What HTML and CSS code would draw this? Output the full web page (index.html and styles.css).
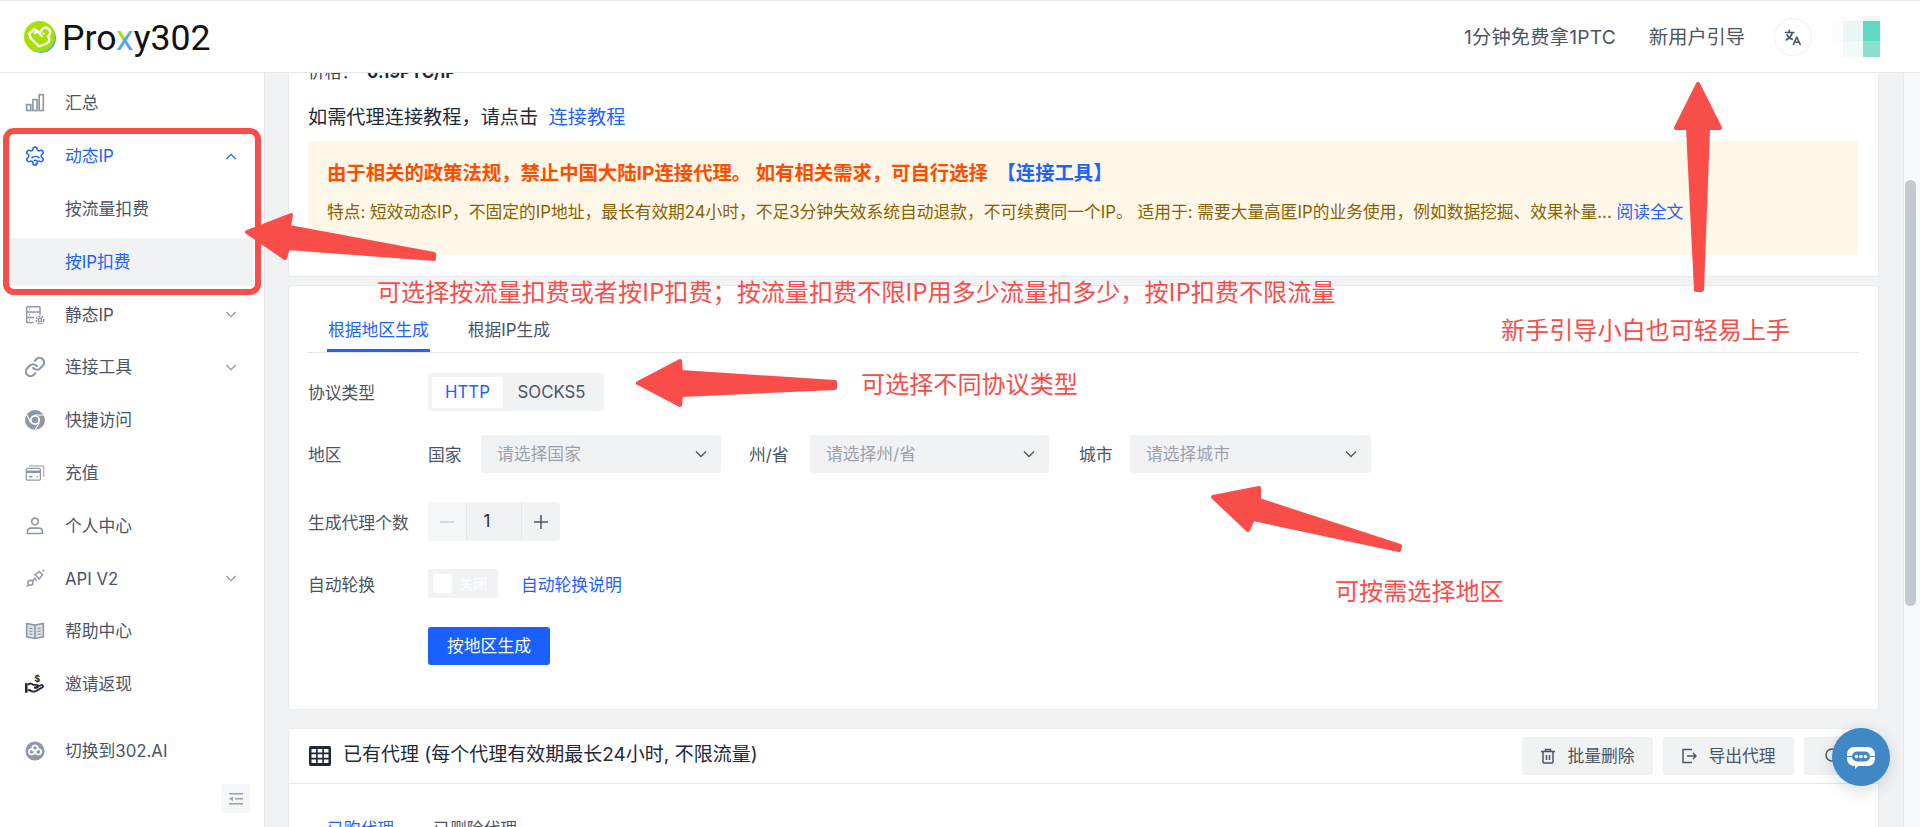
FILE: index.html
```html
<!DOCTYPE html>
<html lang="zh-CN">
<head>
    <meta charset="UTF-8">
    <title>Proxy302</title>
    <link rel="stylesheet" href="styles.css">
</head>
<body>
    <header class="topbar">
        <div class="logo">
            <svg class="logo-mark" viewBox="0 0 32 32">
                <circle cx="17" cy="17" r="15" fill="#4aa8f0"/>
                <circle cx="15.5" cy="15.5" r="15.5" fill="#a5e000"/>
                <path d="M5 13l5.500-5 5 4 3-4a4.500 4.500 0 0 1 7 5.500l-1.500 2 1 1.500a4.500 4.500 0 0 1-2.500 5.500l-7.500 3-8-8z" fill="none" stroke="#fff" stroke-width="2.400" stroke-linejoin="round"/>
                <path d="M10.500 13a2.500 2.500 0 0 1 4.500-1l3.500 4M18.500 12.500h2" fill="none" stroke="#fff" stroke-width="2"/>
            </svg>
            <span class="logo-text">Pro<span class="logo-x">x</span>y302</span>
        </div>
        <div class="topbar-right">
            <span class="top-link free-link">1分钟免费拿1PTC</span>
            <span class="top-link">新用户引导</span>
            <span class="lang-btn">
                <svg viewBox="0 0 24 24" width="18" height="18" fill="none" stroke="#4b5563" stroke-width="2.200" stroke-linecap="round" stroke-linejoin="round"><path d="M2 6h11M7 3v3M11 6c-1 5-4 8-8 10M4 9c1 3 3.500 5 7 6"/><path d="M12.500 22l4.500-10 4.500 10M14 19h6"/></svg>
            </span>
            <div class="avatar">
                <i class="av-a"></i><i class="av-b"></i><i class="av-c"></i>
                <i class="av-d"></i><i class="av-e"></i><i class="av-f"></i>
                <i class="av-a"></i><i class="av-g"></i><i class="av-h"></i>
            </div>
        </div>
    </header>

    <div class="app">
        <aside class="sidebar">
            <ul class="nav">
                <li class="nav-item">
                    <svg class="nav-icon" viewBox="0 0 24 24" fill="none" stroke="#8f98a6" stroke-width="2"><rect x="2" y="14" width="5" height="7"/><rect x="9.500" y="8" width="5" height="13"/><rect x="17" y="2" width="5" height="19"/></svg>
                    <span>汇总</span>
                </li>
                <li class="nav-item active">
                    <svg class="nav-icon" viewBox="1 1 22 22" fill="none" stroke="#1e62ff" stroke-width="1.700"><path d="M12.220 2h-.44a2 2 0 0 0-2 2v.18a2 2 0 0 1-1 1.730l-.43.25a2 2 0 0 1-2 0l-.15-.08a2 2 0 0 0-2.730.73l-.22.38a2 2 0 0 0 .73 2.730l.15.1a2 2 0 0 1 1 1.720v.51a2 2 0 0 1-1 1.740l-.15.09a2 2 0 0 0-.73 2.730l.22.38a2 2 0 0 0 2.730.73l.15-.08a2 2 0 0 1 2 0l.43.25a2 2 0 0 1 1 1.730V20a2 2 0 0 0 2 2h.44a2 2 0 0 0 2-2v-.18a2 2 0 0 1 1-1.730l.43-.25a2 2 0 0 1 2 0l.15.08a2 2 0 0 0 2.730-.73l.22-.39a2 2 0 0 0-.73-2.730l-.15-.08a2 2 0 0 1-1-1.740v-.5a2 2 0 0 1 1-1.740l.15-.09a2 2 0 0 0 .73-2.730l-.22-.38a2 2 0 0 0-2.730-.73l-.15.08a2 2 0 0 1-2 0l-.43-.25a2 2 0 0 1-1-1.730V4a2 2 0 0 0-2-2z"/><path d="M8 14.500a6 6 0 0 1 9 0M10.500 17.500a3 3 0 0 1 4 0M12 20.500h.5" stroke-width="1.500"/></svg>
                    <span>动态IP</span>
                    <svg class="chevron" viewBox="0 0 14 8"><path d="M1.500 7L7 1.500 12.500 7"/></svg>
                </li>
                <li class="nav-item sub">
                    <span>按流量扣费</span>
                </li>
                <li class="nav-item sub current">
                    <span>按IP扣费</span>
                </li>
                <li class="nav-item">
                    <svg class="nav-icon" viewBox="0 0 24 24" fill="none" stroke="#8f98a6" stroke-width="1.800"><path d="M10 21H3a1 1 0 0 1-1-1V3a1 1 0 0 1 1-1h14a1 1 0 0 1 1 1v9M2 8.500h16M2 15h9M5 5.300h1M5 11.800h1M5 18h1"/><circle cx="18" cy="18" r="2"/><circle cx="18" cy="18" r="4.500" stroke-dasharray="2.500 1.200" stroke-width="1.700"/></svg>
                    <span>静态IP</span>
                    <svg class="chevron" viewBox="0 0 14 8"><path d="M1.500 1L7 6.500 12.500 1"/></svg>
                </li>
                <li class="nav-item">
                    <svg class="nav-icon" viewBox="1 1 22 22" fill="none" stroke="#8f98a6" stroke-width="2.400" stroke-linecap="round"><path d="M10 13a5 5 0 0 0 7.540.54l3-3a5 5 0 0 0-7.070-7.070l-1.720 1.710"/><path d="M14 11a5 5 0 0 0-7.540-.54l-3 3a5 5 0 0 0 7.070 7.070l1.710-1.710"/></svg>
                    <span>连接工具</span>
                    <svg class="chevron" viewBox="0 0 14 8"><path d="M1.500 1L7 6.500 12.500 1"/></svg>
                </li>
                <li class="nav-item">
                    <svg class="nav-icon" viewBox="1 1 22 22"><circle cx="12" cy="12" r="11" fill="#8f98a6"/><circle cx="12" cy="12" r="5.500" fill="#fff"/><circle cx="12" cy="12" r="3.600" fill="#8f98a6"/><path d="M12 6.500h10M7.200 14.700L2.800 6M16.800 14.700L12 23" stroke="#fff" stroke-width="1.300"/></svg>
                    <span>快捷访问</span>
                </li>
                <li class="nav-item">
                    <svg class="nav-icon" viewBox="0 0 24 24" fill="none" stroke="#8f98a6" stroke-width="1.500"><rect x="1.500" y="6.500" width="17" height="14" rx="1.500"/><path d="M1.500 10.500h17" stroke-width="3"/><path d="M5 16.500h4M14 16.500h1.500" stroke-width="2"/><path d="M5 3.500h17.500v13" stroke-width="1.200"/></svg>
                    <span>充值</span>
                </li>
                <li class="nav-item">
                    <svg class="nav-icon" viewBox="0 0 24 24" fill="none" stroke="#8f98a6" stroke-width="2"><circle cx="12" cy="6.500" r="4"/><path d="M3 21v-2.500a4 4 0 0 1 4-4h10a4 4 0 0 1 4 4V21z"/></svg>
                    <span>个人中心</span>
                </li>
                <li class="nav-item">
                    <svg class="nav-icon" viewBox="0 0 24 24" fill="none" stroke="#8f98a6" stroke-width="1.800"><circle cx="6.500" cy="16.500" r="3"/><path d="M12 7l5-4 4 4-4 5zM9 14l3.500-3.500M2 21l2.300-2.300M21 3l2-2M14 14l-2.500-2.500"/></svg>
                    <span>API V2</span>
                    <svg class="chevron" viewBox="0 0 14 8"><path d="M1.500 1L7 6.500 12.500 1"/></svg>
                </li>
                <li class="nav-item">
                    <svg class="nav-icon" viewBox="0 0 24 24" fill="none" stroke="#8f98a6" stroke-width="2"><path d="M2 3l10 2 10-2v16l-10 2-10-2zM12 5v16" fill="#dfe2e6"/><path d="M5 8.500l4 .7M5 12l4 .7M5 15.500l4 .7M15 9.200l4-.7M15 12.700l4-.7M15 16.200l4-.7" stroke-width="1.500"/></svg>
                    <span>帮助中心</span>
                </li>
                <li class="nav-item">
                    <svg class="nav-icon" viewBox="0 0 24 24" fill="none" stroke="#1f2937" stroke-width="2.200"><path d="M1.500 11v11.500" stroke-width="3"/><path d="M3 13c3-2.500 5-2 7 0h4a1.500 1.500 0 0 1 0 3.500h-3l8-3a1.600 1.600 0 0 1 2 2.500l-8 4.500c-3 1-6 0-7-1H3"/><text x="11" y="10" class="dollar">$</text></svg>
                    <span>邀请返现</span>
                </li>
            </ul>
            <div class="nav-item switch-item">
                <svg class="nav-icon" viewBox="0 0 24 24"><circle cx="12" cy="12" r="11.500" fill="#8f98a6"/><circle cx="8" cy="13" r="3.300" fill="none" stroke="#fff" stroke-width="2"/><circle cx="16" cy="13" r="3.300" fill="none" stroke="#fff" stroke-width="2"/><circle cx="12" cy="8.500" r="3.300" fill="none" stroke="#fff" stroke-width="2"/></svg>
                <span>切换到302.AI</span>
            </div>
            <div class="collapse-row">
                <span class="collapse-btn">
                    <svg viewBox="0 0 14 12" width="14" height="12" fill="#9ca3af"><rect x="0" y="0" width="14" height="1.500"/><rect x="6" y="5" width="8" height="1.500"/><rect x="0" y="10" width="14" height="1.500"/><path d="M0 5.800L4 3.500v4.600z"/></svg>
                </span>
            </div>
        </aside>

        <main class="main">
            <div class="content">
                <section class="card intro-card">
                    <p class="price">价格： <b>0.19PTC/IP</b></p>
                    <p class="tutorial">如需代理连接教程，请点击 <a class="link tutorial-link">连接教程</a></p>
                    <div class="notice">
                        <p class="notice-title">由于相关的政策法规，禁止中国大陆IP连接代理。 如有相关需求，可自行选择 <a class="link">【连接工具】</a></p>
                        <p class="notice-desc">特点: 短效动态IP，不固定的IP地址，最长有效期24小时，不足3分钟失效系统自动退款，不可续费同一个IP。 适用于: 需要大量高匿IP的业务使用，例如数据挖掘、效果补量... <a class="link">阅读全文</a></p>
                    </div>
                </section>

                <section class="card form-card">
                    <div class="tabs">
                        <span class="tab on">根据地区生成</span>
                        <span class="tab">根据IP生成</span>
                    </div>
                    <div class="form-row row-protocol">
                        <label class="form-label">协议类型</label>
                        <div class="segment">
                            <span class="seg-item on">HTTP</span>
                            <span class="seg-item">SOCKS5</span>
                        </div>
                    </div>
                    <div class="form-row row-region">
                        <label class="form-label">地区</label>
                        <span class="field-name">国家</span>
                        <div class="select select-country">请选择国家<svg class="select-arrow" viewBox="0 0 12 8"><path d="M1 1.500l5 5 5-5"/></svg></div>
                        <span class="field-name state-name">州/省</span>
                        <div class="select select-state">请选择州/省<svg class="select-arrow" viewBox="0 0 12 8"><path d="M1 1.500l5 5 5-5"/></svg></div>
                        <span class="field-name city-name">城市</span>
                        <div class="select select-city">请选择城市<svg class="select-arrow" viewBox="0 0 12 8"><path d="M1 1.500l5 5 5-5"/></svg></div>
                    </div>
                    <div class="form-row row-count">
                        <label class="form-label">生成代理个数</label>
                        <div class="stepper">
                            <span class="step-btn minus"><svg viewBox="0 0 16 16" width="16" height="16"><path d="M1 8h14" stroke="#c9cdd3" stroke-width="1.500"/></svg></span>
                            <span class="step-val">1</span>
                            <span class="step-btn"><svg viewBox="0 0 16 16" width="16" height="16"><path d="M1 8h14M8 1v14" stroke="#4b5563" stroke-width="1.500"/></svg></span>
                        </div>
                    </div>
                    <div class="form-row row-rotate">
                        <label class="form-label">自动轮换</label>
                        <div class="toggle"><i class="knob"></i><span>关闭</span></div>
                        <a class="link rotate-link">自动轮换说明</a>
                    </div>
                    <div class="form-row row-submit">
                        <button class="primary-btn">按地区生成</button>
                    </div>
                </section>

                <section class="card list-card">
                    <div class="list-head">
                        <svg class="table-icon" viewBox="0 0 22 20"><rect width="22" height="20" rx="2" fill="#1f2937"/><path d="M2.500 3h4.600v3.500H2.500zM8.700 3h4.600v3.500H8.700zM14.900 3h4.600v3.500h-4.600zM2.500 8.200h4.600v3.500H2.500zM8.700 8.200h4.600v3.500H8.700zM14.900 8.200h4.600v3.500h-4.600zM2.500 13.400h4.600v3.600H2.500zM8.700 13.400h4.600v3.600H8.700zM14.900 13.400h4.600v3.600h-4.600z" fill="#fff"/></svg>
                        <h2 class="list-title">已有代理 (每个代理有效期最长24小时, 不限流量)</h2>
                        <div class="list-actions">
                            <button class="ghost-btn"><svg viewBox="0 0 16 16" width="16" height="16" fill="none" stroke="#4b5563" stroke-width="1.500"><path d="M1 3.500h14M5.500 3V1.500h5V3M3 3.500V14a1 1 0 0 0 1 1h8a1 1 0 0 0 1-1V3.500M6.500 7v5M9.500 7v5"/></svg>批量删除</button>
                            <button class="ghost-btn"><svg viewBox="0 0 16 16" width="16" height="16" fill="none" stroke="#4b5563" stroke-width="1.500"><path d="M11 1.500H2v13h9M6 8h9M12 5l3 3-3 3"/></svg>导出代理</button>
                            <button class="ghost-btn search-btn"><svg viewBox="0 0 16 16" width="16" height="16" fill="none" stroke="#4b5563" stroke-width="1.500"><circle cx="7" cy="7" r="6"/><path d="M11.500 11.500L15 15"/></svg></button>
                        </div>
                    </div>
                    <div class="list-tabs">
                        <span class="tab on">已购代理</span>
                        <span class="tab">已删除代理</span>
                    </div>
                </section>
            </div>
        </main>
        <div class="scrollbar"><i class="thumb"></i></div>
    </div>

    <div class="chat-btn">
        <svg viewBox="0 0 32 32" width="32" height="32"><path d="M9 6h14a7 7 0 0 1 7 7v5a7 7 0 0 1-7 7H13l-3 3v-3.200A7 7 0 0 1 2 18v-5a7 7 0 0 1 7-7z" fill="#fff"/><rect x="7" y="10.500" width="18" height="10" rx="5" fill="#3f88c5"/><path d="M0 15.500h7M25 15.500h7" stroke="#3f88c5" stroke-width="1"/><circle cx="11.500" cy="15.500" r="1.800" fill="#fff"/><circle cx="16" cy="15.500" r="1.800" fill="#fff"/><circle cx="20.500" cy="15.500" r="1.800" fill="#fff"/></svg>
    </div>

    <!-- annotations drawn over the screenshot -->
    <svg class="markup" viewBox="0 0 1920 827" width="1920" height="827">
        <rect x="6" y="131" width="252" height="161" rx="8" fill="none" stroke="#f94d4a" stroke-width="6"/>
        <g fill="#f94d4a" stroke="#f94d4a" stroke-width="4" stroke-linejoin="round">
            <path d="M247 232L291 215 289 227 434 254 434 259 288 248 285 258z"/>
            <path d="M638 383L680 361 681 372 835 382 835 388 681 395 680 405z"/>
            <path d="M1213 497L1259 488 1259 500 1400 546 1399 550 1253 519 1248 530z"/>
            <path d="M1698 84L1676 128 1688 128 1696 290 1702 290 1708 128 1720 128z"/>
        </g>
    </svg>
    <span class="note note-billing">可选择按流量扣费或者按IP扣费；按流量扣费不限IP用多少流量扣多少，按IP扣费不限流量</span>
    <span class="note note-protocol">可选择不同协议类型</span>
    <span class="note note-region">可按需选择地区</span>
    <span class="note note-guide">新手引导小白也可轻易上手</span>
</body>
</html>
```

FILE: styles.css
```css
* {
    box-sizing: border-box;
}
html, body {
    margin: 0;
    height: 827px;
    overflow: hidden;
}
body {
    font-family: Inter, "Noto Sans CJK SC", sans-serif;
    font-size: 16.8px;
    line-height: 24px;
    color: #4b5563;
    background-color: #f1f2f4;
    position: relative;
}
p, h2, ul {
    margin: 0;
    padding: 0;
}
.link {
    color: #1e62ff;
}

/* top bar */
.topbar {
    height: 73px;
    display: flex;
    align-items: center;
    justify-content: space-between;
    background-color: #fff;
    border-top: 1px solid #e5e7eb;
    border-bottom: 1px solid #e5e7eb;
    position: relative;
    z-index: 2;
}
.logo {
    display: flex;
    align-items: center;
    margin-left: 24px;
}
.logo-mark {
    width: 32px;
    height: 32px;
}
.logo-text {
    font-family: Roboto, sans-serif;
    font-size: 35.6px;
    line-height: 40px;
    margin-left: 6px;
    margin-top: 2px;
    color: #111;
}
.logo-x {
    background: linear-gradient(135deg, #a5e000 50%, #4aa8f0 50%);
    -webkit-background-clip: text;
    background-clip: text;
    color: transparent;
}
.topbar-right {
    display: flex;
    align-items: center;
    margin-right: 40px;
}
.top-link {
    font-size: 19.2px;
    margin-right: 33px;
}
.free-link {
    letter-spacing: 0.25px;
}
.lang-btn {
    width: 38px;
    height: 38px;
    border: 1px solid #f1f2f4;
    border-radius: 50%;
    display: flex;
    align-items: center;
    justify-content: center;
    margin-left: -4px;
    margin-right: 20px;
}
.avatar {
    width: 48px;
    height: 41px;
    display: grid;
    grid-template-columns: 11px 20px 17px;
    grid-template-rows: 5px 20px 16px;
}
.av-a { background-color: #fff; }
.av-b { background-color: #fbfefd; }
.av-c { background-color: #eefaf7; }
.av-d { background-color: #f9fdfc; }
.av-e { background-color: #e9f6f3; }
.av-f { background-color: #5fd8c0; }
.av-g { background-color: #f1faf8; }
.av-h { background-color: #8ce0cc; }

/* layout */
.app {
    display: flex;
    height: 754px;
}
.sidebar {
    width: 265px;
    flex-shrink: 0;
    background-color: #fff;
    border-right: 1px solid #e5e7eb;
    padding-top: 4px;
}
.nav {
    list-style: none;
}
.nav-item {
    height: 52.800px;
    display: flex;
    align-items: center;
    padding-left: 25px;
    padding-right: 17px;
    margin: 0 10px 0 0;
    color: #4b5563;
}
.nav-item span {
    flex: 1;
}
.nav-icon {
    width: 20px;
    height: 20px;
    margin-right: 20px;
    flex-shrink: 0;
}
.dollar {
    font-family: Inter, sans-serif;
    font-size: 11px;
    font-weight: 700;
    fill: #1f2937;
    stroke: none;
}
.chevron {
    width: 12px;
    height: 7px;
    fill: none;
    stroke: #8f98a6;
    stroke-width: 1.500;
}
.nav-item.active, .nav-item.current {
    color: #1e62ff;
}
.active .chevron {
    stroke: #1e62ff;
}
.nav-item.sub {
    padding-left: 65px;
}
.nav-item.current {
    background-color: #f1f2f4;
    margin-left: 10px;
    padding-left: 55px;
    height: 48px;
    margin-top: 2.400px;
    margin-bottom: 2.400px;
    border-radius: 3px;
}
.switch-item {
    margin-top: 14px;
}
.collapse-row {
    display: flex;
    justify-content: flex-end;
    padding-right: 14px;
    margin-top: 7px;
}
.collapse-btn {
    width: 29px;
    height: 29px;
    background-color: #f5f6f8;
    border-radius: 3px;
    display: flex;
    align-items: center;
    justify-content: center;
}
.main {
    width: 1638px;
    flex-shrink: 0;
    overflow: hidden;
    padding: 0 25px 0 24px;
}
.scrollbar {
    flex: 1;
    background-color: #f7f8f9;
    border-left: 1px solid #e8e9ec;
    padding: 107px 4px 0 1px;
}
.thumb {
    display: block;
    height: 426px;
    background-color: #c4c9cf;
    border-radius: 6px;
}

/* cards */
.content {
    margin-top: -18px;
}
.card {
    background-color: #fff;
    box-shadow: 0 0 0 1px #e9ebee;
    border-radius: 2px;
}
.intro-card {
    height: 221px;
    padding: 5px 20px 0 19px;
    margin-bottom: 10px;
}
.price {
    color: #374151;
}
.price b {
    color: #1f2937;
    margin-left: 4px;
}
.tutorial {
    font-size: 19.2px;
    line-height: 28px;
    color: #1f2937;
    margin-top: 19px;
}
.tutorial-link {
    margin-left: 5px;
}
.notice {
    height: 114px;
    margin-top: 10px;
    background-color: #fff7e8;
    padding: 18px 20px 0 19px;
}
.notice-title {
    font-size: 19.35px;
    line-height: 28px;
    font-weight: 700;
    color: #ff4d00;
}
.notice-title .link {
    margin-left: 4px;
}
.notice-desc {
    font-size: 16.74px;
    line-height: 24px;
    color: #8a6100;
    margin-top: 13px;
    white-space: nowrap;
}

.form-card {
    height: 423px;
    padding: 0 19px;
    margin-bottom: 20px;
}
.tabs, .list-tabs {
    display: flex;
    gap: 37px;
    padding-left: 19px;
}
.tabs {
    height: 67px;
    padding-top: 32px;
    border-bottom: 1px solid #e5e7eb;
}
.tab {
    display: block;
    height: 34px;
    line-height: 24px;
    padding: 0 1px;
    color: #4b5563;
}
.tab.on {
    color: #1e62ff;
    border-bottom: 3px solid #1e62ff;
}
.form-row {
    display: flex;
    align-items: center;
}
.form-label {
    width: 120px;
    flex-shrink: 0;
    padding-top: 2px;
}
.row-protocol {
    height: 38px;
    margin-top: 20px;
}
.segment {
    width: 176px;
    height: 38px;
    display: flex;
    align-items: center;
    padding: 0 4px;
    background-color: #f1f2f4;
    border-radius: 3px;
}
.seg-item {
    height: 31px;
    line-height: 31px;
    text-align: center;
    flex: 1;
}
.seg-item.on {
    flex: none;
    width: 71px;
    background-color: #fff;
    color: #1e62ff;
    border-radius: 2px;
}
.row-region {
    height: 38px;
    margin-top: 24px;
}
.field-name {
    width: 53px;
    flex-shrink: 0;
    padding-top: 2px;
}
.state-name {
    width: 61px;
    margin-left: 28px;
}
.city-name {
    width: 51px;
    margin-left: 30px;
}
.select {
    height: 38px;
    background-color: #f1f2f4;
    border-radius: 3px;
    display: flex;
    align-items: center;
    justify-content: space-between;
    padding: 0 14px 0 16px;
    color: #9ca3af;
}
.select-country { width: 240px; }
.select-state { width: 239px; }
.select-city { width: 241px; }
.select-arrow {
    width: 12px;
    height: 8px;
    fill: none;
    stroke: #4b5563;
    stroke-width: 1.300;
}
.row-count {
    height: 39px;
    margin-top: 29px;
}
.stepper {
    width: 132px;
    height: 39px;
    display: flex;
    background-color: #f1f2f4;
    border-radius: 3px;
    color: #1f2937;
}
.step-btn {
    width: 38px;
    display: flex;
    align-items: center;
    justify-content: center;
}
.step-btn.minus {
    background-color: #f5f6f8;
    border-radius: 3px 0 0 3px;
}
.step-val {
    flex: 1;
    text-align: center;
    line-height: 39px;
    padding-right: 14px;
    border-left: 1px solid #e5e7eb;
    border-right: 1px solid #e5e7eb;
}
.row-rotate {
    height: 29px;
    margin-top: 28px;
}
.toggle {
    width: 70px;
    height: 29px;
    display: flex;
    align-items: center;
    background-color: #f1f2f4;
    border-radius: 2px;
    padding-left: 5px;
    color: #fff;
    font-size: 14px;
}
.knob {
    width: 19px;
    height: 19px;
    background-color: #fff;
    border-radius: 2px;
    margin-right: 7px;
}
.rotate-link {
    margin-left: 23px;
    padding-top: 2px;
}
.row-submit {
    padding-left: 120px;
    margin-top: 29px;
}
.primary-btn {
    width: 122px;
    height: 38px;
    border: none;
    border-radius: 3px;
    background-color: #1a5fff;
    color: #fff;
    font: inherit;
}

.list-card {
    height: 300px;
}
.list-head {
    height: 55px;
    display: flex;
    align-items: center;
    padding: 0 19px 0 20px;
    border-bottom: 1px solid #e5e7eb;
}
.table-icon {
    width: 22px;
    height: 20px;
    margin-right: 12px;
}
.list-title {
    flex: 1;
    font-size: 19px;
    line-height: 28px;
    font-weight: 400;
    color: #1f2937;
    margin-top: -2px;
}
.list-actions {
    display: flex;
    gap: 10px;
}
.ghost-btn {
    width: 131px;
    height: 38px;
    border: none;
    border-radius: 3px;
    background-color: #f1f2f4;
    color: #4b5563;
    font: inherit;
    display: flex;
    align-items: center;
    justify-content: center;
    gap: 11px;
}
.search-btn {
    width: 55px;
    justify-content: flex-start;
    padding-left: 21px;
}
.list-tabs {
    padding-left: 37px;
    margin-top: 33px;
}

/* things that sit over the page */
.chat-btn {
    position: absolute;
    left: 1832px;
    top: 728px;
    width: 58px;
    height: 58px;
    border-radius: 50%;
    background-color: #3f88c5;
    display: flex;
    align-items: center;
    justify-content: center;
    box-shadow: 0 4px 16px rgba(30, 50, 80, 0.18);
    z-index: 3;
}
.markup {
    position: absolute;
    left: 0;
    top: 0;
    z-index: 4;
    pointer-events: none;
}
.note {
    position: absolute;
    z-index: 5;
    font-family: "Noto Sans CJK SC", sans-serif;
    font-size: 24.1px;
    line-height: 32px;
    color: #f94d4a;
    white-space: nowrap;
}
.note-billing { left: 377px; top: 275px; }
.note-protocol { left: 861px; top: 367px; }
.note-region { left: 1335px; top: 574px; }
.note-guide { left: 1501px; top: 313px; }
```
